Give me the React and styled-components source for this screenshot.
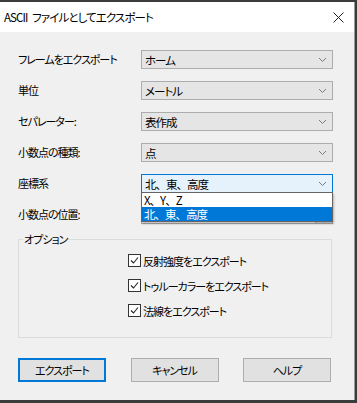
import styled, { createGlobalStyle } from "styled-components";

const GlobalStyle = createGlobalStyle`
  html, body {
    margin: 0;
    padding: 0;
    background: #3b3b3b;
  }
  body {
    font-family: "Noto Sans CJK JP", "Noto Sans", sans-serif;
    font-size: 11px;
    letter-spacing: -1px;
    font-feature-settings: "palt";
    color: #000;
  }
`;

const Window = styled.div`
  width: 355px;
  height: 398px;
  margin-top: 2px;
  background: #f0f0f0;
  display: flex;
  flex-direction: column;
  border-right: 1px solid #9a9a9a;
  box-sizing: border-box;
`;

const TitleBar = styled.div`
  height: 30px;
  background: #ffffff;
  display: flex;
  align-items: center;
  justify-content: space-between;
  padding: 0 10px 0 4px;
  font-size: 11.5px;
  letter-spacing: -0.9px;
`;

const TitleText = styled.span`
  word-spacing: 3px;
`;

const Body = styled.div`
  padding: 18px 22px 0 18px;
  display: flex;
  flex-direction: column;
`;

const FormGrid = styled.div`
  display: grid;
  grid-template-columns: 123px 192px;
  grid-auto-rows: 19px;
  row-gap: 12px;
  align-items: center;
`;

const Label = styled.div`
  line-height: 19px;
  white-space: nowrap;
`;

const SelectWrap = styled.div`
  position: relative;
  height: 19px;
`;

const Select = styled.div`
  height: 19px;
  box-sizing: border-box;
  border: 1px solid ${(p) => (p.$active ? "#0078d7" : "#adadad")};
  background: ${(p) => (p.$active ? "#e5f1fb" : p.$plain ? "#ffffff" : "#e5e5e5")};
  display: flex;
  align-items: center;
  justify-content: space-between;
  padding: 0 0 0 3px;
  font-size: 11.5px;
`;

const Value = styled.span`
  font-feature-settings: ${(p) => (p.$wide ? "normal" : "palt")};
`;

const Chevron = styled.span`
  width: 14px;
  display: flex;
  justify-content: center;
  margin-right: 3px;
`;

const OldButton = styled.span`
  width: 16px;
  height: 17px;
  background: #e1e1e1;
  border-left: 1px solid #adadad;
  display: flex;
  align-items: flex-end;
  justify-content: center;
  font-size: 8px;
  line-height: 9px;
`;

const List = styled.div`
  position: absolute;
  top: 18px;
  left: 0;
  width: 192px;
  box-sizing: border-box;
  border: 1px solid #646464;
  background: #fff;
  box-shadow: 1px 2px 2px rgba(0, 0, 0, 0.25);
  z-index: 2;
`;

const ListItem = styled.div`
  height: 14px;
  line-height: 14px;
  padding-left: 2px;
  font-size: 11.5px;
  font-feature-settings: normal;
  background: ${(p) => (p.$selected ? "#0078d7" : "#fff")};
  color: ${(p) => (p.$selected ? "#fff" : "#000")};
`;

const Group = styled.fieldset`
  margin: 8px 0 0 0;
  padding: 0;
  border: 1px solid #dcdcdc;
  height: 106px;
  box-sizing: border-box;
`;

const Legend = styled.legend`
  padding: 0 1px;
  margin-left: 4px;
  font-size: 11px;
  line-height: 14px;
`;

const CheckList = styled.div`
  padding: 8px 0 0 109px;
  display: flex;
  flex-direction: column;
  gap: 12px;
`;

const CheckRow = styled.label`
  display: flex;
  align-items: center;
  gap: 2px;
  height: 13px;
  white-space: nowrap;
`;

const Box = styled.span`
  width: 13px;
  height: 13px;
  box-sizing: border-box;
  border: 1px solid #333;
  background: #fff;
  display: flex;
  align-items: center;
  justify-content: center;
`;

const ButtonRow = styled.div`
  margin-top: 20px;
  display: flex;
  justify-content: space-between;
  padding-right: 1px;
`;

const Button = styled.button`
  width: 88px;
  height: 24px;
  box-sizing: border-box;
  background: #e1e1e1;
  border: ${(p) => (p.$default ? "2px solid #0078d7" : "1px solid #adadad")};
  font-family: inherit;
  font-size: 11px;
  letter-spacing: -1px;
  font-feature-settings: "palt";
  color: #000;
  padding: 0;
`;

function ChevronIcon() {
  return (
    <svg width="9" height="6" viewBox="0 0 9 6">
      <polyline points="1,1 4.5,4.5 8,1" fill="none" stroke="#7a7a7a" strokeWidth="1" />
    </svg>
  );
}

function CheckIcon() {
  return (
    <svg width="11" height="11" viewBox="0 0 11 11">
      <polyline points="2,5.5 4.5,8 9,2.5" fill="none" stroke="#222" strokeWidth="1.1" />
    </svg>
  );
}

function Combo({ value }) {
  return (
    <SelectWrap>
      <Select>
        <Value>{value}</Value>
        <Chevron>
          <ChevronIcon />
        </Chevron>
      </Select>
    </SelectWrap>
  );
}

const rows = [
  ["フレームをエクスポート", "ホーム"],
  ["単位", "メートル"],
  ["セパレーター:", "表作成"],
  ["小数点の種類:", "点"],
];

const options = ["反射強度をエクスポート", "トゥルーカラーをエクスポート", "法線をエクスポート"];

export default function App() {
  return (
    <>
      <GlobalStyle />
      <Window>
        <TitleBar>
          <TitleText>ASCII ファイルとしてエクスポート</TitleText>
          <svg width="11" height="11" viewBox="0 0 11 11">
            <path d="M0.5 0.5 L10.5 10.5 M10.5 0.5 L0.5 10.5" stroke="#222" strokeWidth="1" />
          </svg>
        </TitleBar>
        <Body>
          <FormGrid>
            {rows.map(([label, value]) => [
              <Label key={label + "l"}>{label}</Label>,
              <Combo key={label + "s"} value={value} />,
            ])}
            <Label>座標系</Label>
            <SelectWrap>
              <Select $active>
                <Value $wide>北、東、高度</Value>
                <Chevron>
                  <ChevronIcon />
                </Chevron>
              </Select>
              <List>
                <ListItem>X、Y、Z</ListItem>
                <ListItem $selected>北、東、高度</ListItem>
              </List>
            </SelectWrap>
            <Label>小数点の位置:</Label>
            <SelectWrap>
              <Select $plain>
                <span></span>
                <OldButton>▼</OldButton>
              </Select>
            </SelectWrap>
          </FormGrid>
          <Group>
            <Legend>オプション</Legend>
            <CheckList>
              {options.map((o) => (
                <CheckRow key={o}>
                  <Box>
                    <CheckIcon />
                  </Box>
                  {o}
                </CheckRow>
              ))}
            </CheckList>
          </Group>
          <ButtonRow>
            <Button $default>エクスポート</Button>
            <Button>キャンセル</Button>
            <Button>ヘルプ</Button>
          </ButtonRow>
        </Body>
      </Window>
    </>
  );
}
